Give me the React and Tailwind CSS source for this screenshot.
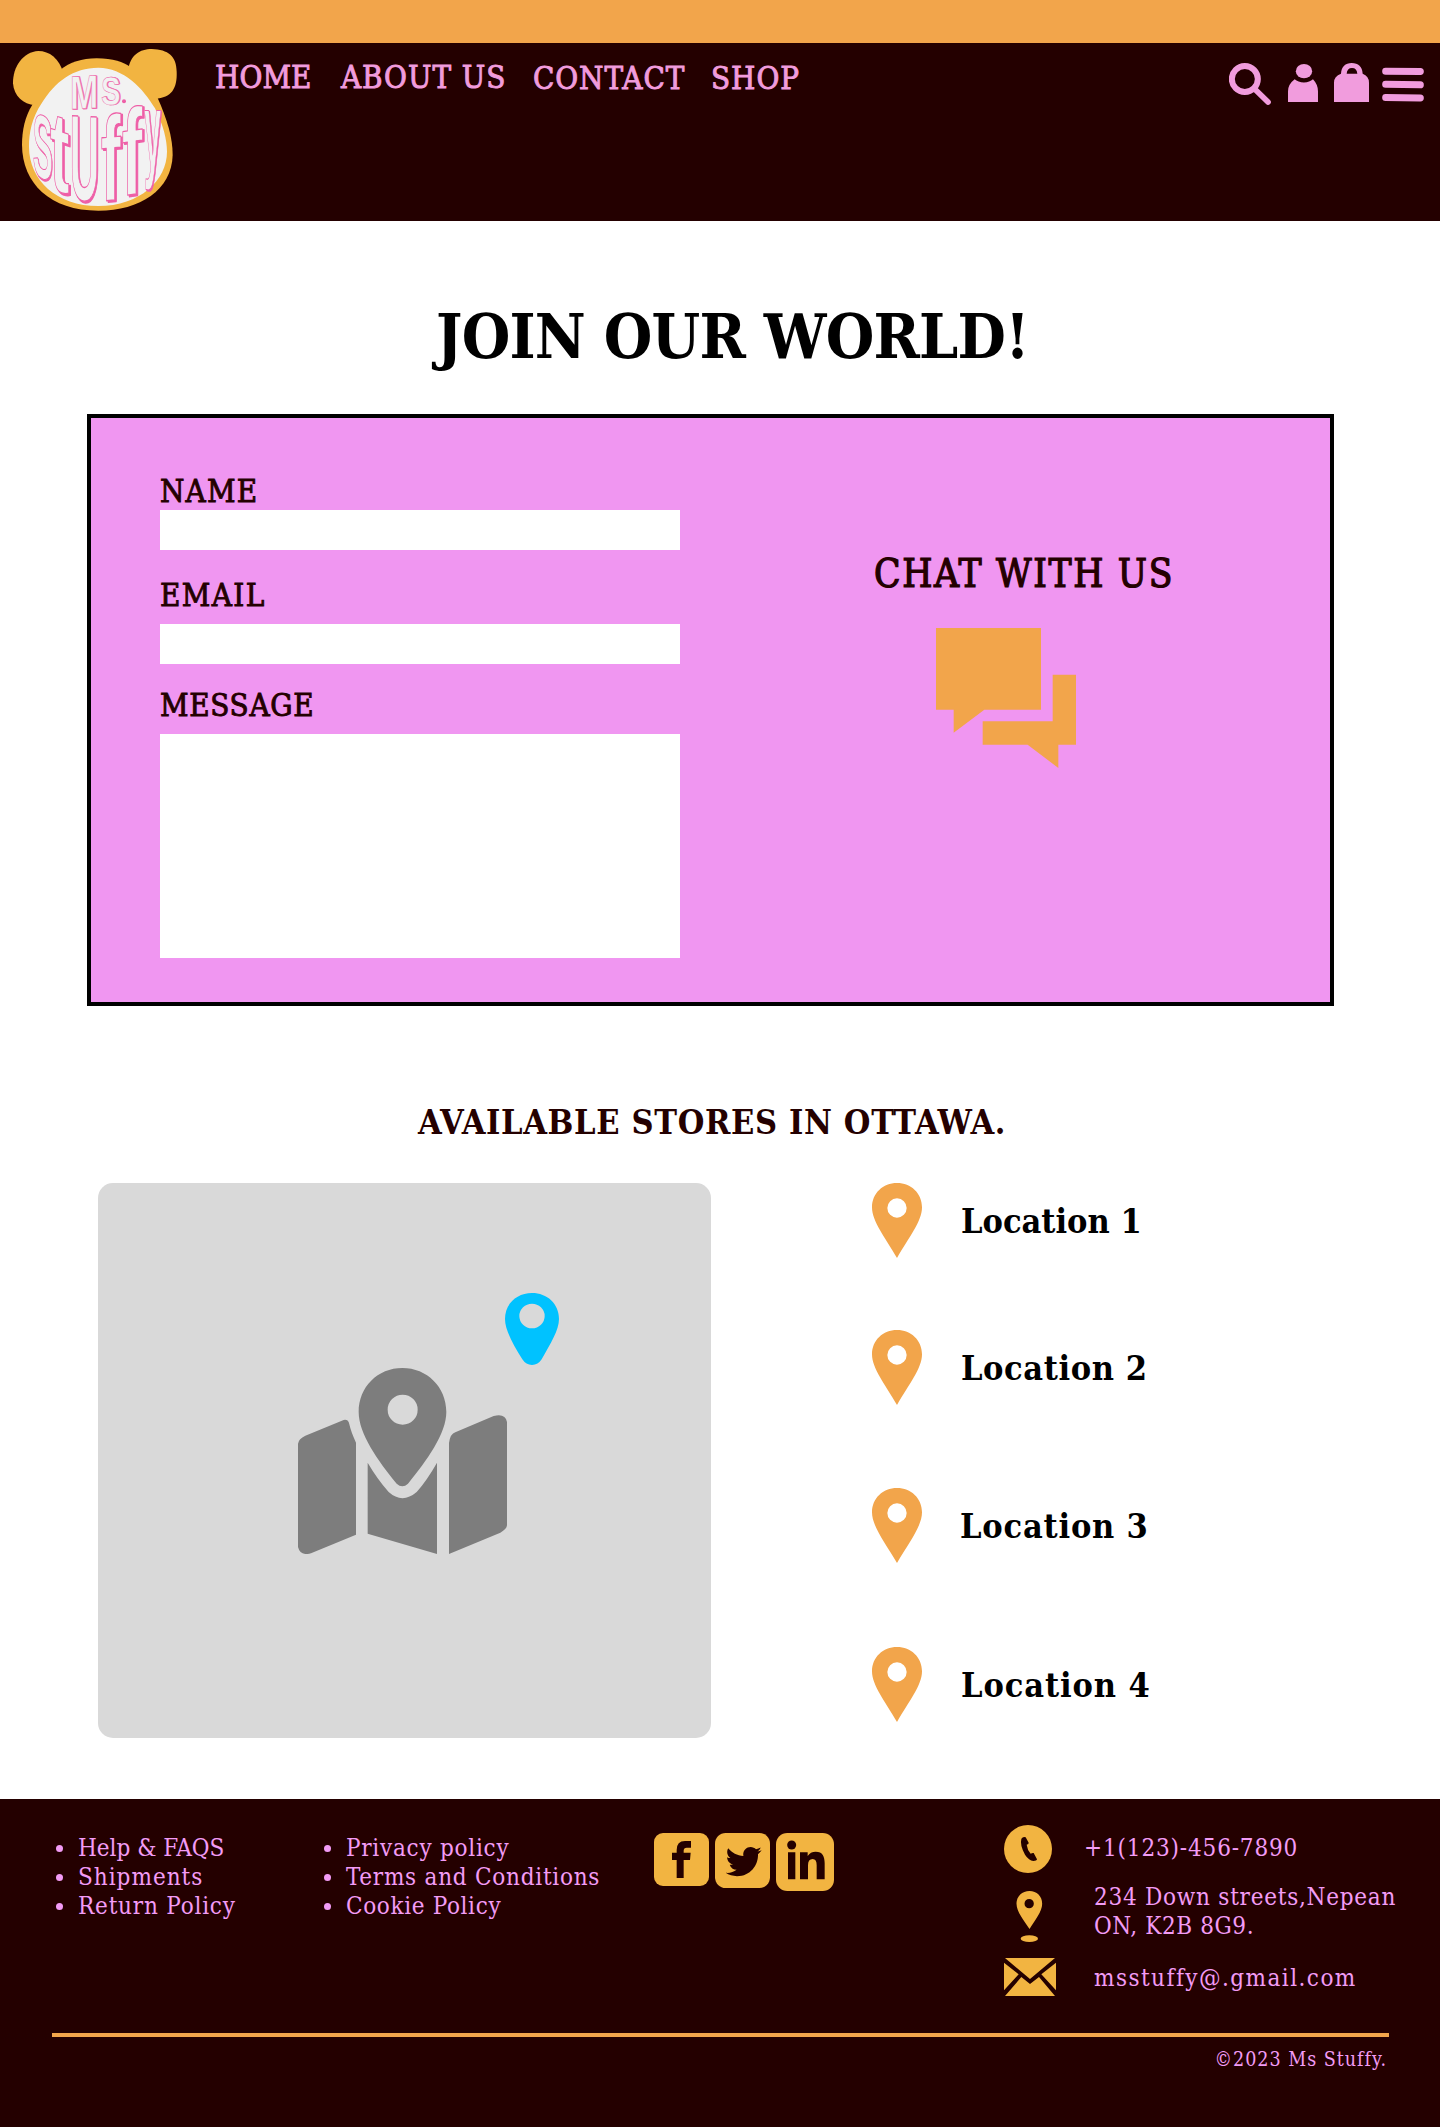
const medium = "[-webkit-text-stroke:0.9px_currentColor]";

const navItems = [
  { label: "HOME", cls: "w-[126px] tracking-[0.1px]" },
  { label: "ABOUT US", cls: "w-[192px] tracking-[0.95px]" },
  { label: "CONTACT", cls: "w-[178px] tracking-[0.95px] pt-px" },
  { label: "SHOP", cls: "tracking-[1px] pt-px" },
];

const locations = [
  { label: "Location 1", text: "pl-[39px] tracking-[0px]", row: "h-[147px]" },
  { label: "Location 2", text: "pl-[39px] tracking-[0.6px]", row: "h-[158px]" },
  { label: "Location 3", text: "pl-[38px] tracking-[0.8px]", row: "h-[159px]" },
  { label: "Location 4", text: "pl-[39px] tracking-[0.9px]", row: "h-[75px]" },
];

const helpLinks = [
  { label: "Help & FAQS", cls: "tracking-[0px]" },
  { label: "Shipments", cls: "tracking-[1px]" },
  { label: "Return Policy", cls: "tracking-[0.8px]" },
];

const policyLinks = [
  { label: "Privacy policy", cls: "tracking-[0.75px]" },
  { label: "Terms and Conditions", cls: "tracking-[0.75px]" },
  { label: "Cookie Policy", cls: "tracking-[0.65px]" },
];

function LogoLetter({ ch, x, y, sx, sy, skew = 0, lean = 0 }) {
  return (
    <g transform={`translate(${x} ${y}) skewY(${skew}) skewX(${lean}) scale(${sx} ${sy})`}>
      <text x="3" y="1.2" fill="#ee5fa7" stroke="#ee5fa7" strokeWidth="1.6" strokeLinejoin="round">{ch}</text>
      <text x="0" y="0" fill="#f2f2f2" stroke="#ee5fa7" strokeWidth="1.1" strokeLinejoin="round">{ch}</text>
    </g>
  );
}

function Logo() {
  return (
    <svg className="h-[178px] w-[200px] shrink-0 overflow-visible" viewBox="0 39 600 534" fontFamily="'Liberation Sans'" fontWeight="700" fontSize="100">
      <g fill="#f2b441">
        <path d="M190 130C178 85 148 63 115 63C70 65 38 110 39 160C42 200 70 222 105 226Z" />
        <path d="M385 120C390 75 420 57 455 57C505 58 530 80 530 125C532 175 515 203 465 206Z" />
        <path d="M290 85C340 85 370 97 390 110C430 140 455 175 473 204C500 265 518 320 518 375C515 480 420 542 295 542C150 542 67 460 66 345C66 300 75 260 97 224L180 120C210 97 245 85 290 85Z" />
      </g>
      <path fill="#f2f2f2" d="M295 113C370 113 430 175 465 235C490 285 501 330 501 365C501 450 420 528 295 528C170 528 87 450 87 350C87 310 95 265 125 220C165 155 220 113 295 113Z" />
      <LogoLetter ch="M" x={210} y={238} sx={1.02} sy={1.42} skew={-3} />
      <LogoLetter ch="S" x={303} y={224} sx={0.88} sy={1.22} />
      <circle cx="372" cy="214" r="6" fill="#ee5fa7" />
      <LogoLetter ch="S" x={98} y={432} sx={0.9} sy={2.7} skew={22} />
      <LogoLetter ch="t" x={150} y={474} sx={1.75} sy={3.4} skew={18} />
      <LogoLetter ch="U" x={209} y={508} sx={1.22} sy={3.65} skew={3} />
      <LogoLetter ch="f" x={302} y={514} sx={1.8} sy={3.6} skew={-5} />
      <LogoLetter ch="f" x={365} y={498} sx={1.85} sy={3.65} skew={-8} />
      <LogoLetter ch="y" x={433} y={414} sx={0.9} sy={3.2} />
    </svg>
  );
}

function OrangePin() {
  return (
    <svg className="h-[75px] w-[50px] shrink-0" viewBox="0 0 150 225" fill="#f2a54b" fillRule="evenodd">
      <path d="M75 0C117 0 150 31 150 73C150 115 110 165 75 225C40 165 0 115 0 73C0 31 33 0 75 0ZM75 46A29 29 0 1 0 75 104A29 29 0 1 0 75 46Z" />
    </svg>
  );
}

function Header() {
  return (
    <header>
      <div className="h-[43px] bg-[#f2a54b]" />
      <div className="flex h-[178px] items-start bg-[#240000] text-[#f19cdd]">
        <Logo />
        <nav className={`flex pt-[14px] pl-[15px] text-[31px] leading-[40px] whitespace-nowrap ${medium}`}>
          {navItems.map((n) => (
            <a key={n.label} className={n.cls}>{n.label}</a>
          ))}
        </nav>
        <div className="ml-auto flex items-start pt-5 pr-4">
          <svg className="h-[42px] w-[42px]" viewBox="57 69 126 126" fill="none" stroke="currentColor">
            <circle cx="104.500" cy="117" r="39" strokeWidth="18" />
            <path d="M134 147L174 186" strokeWidth="17" strokeLinecap="round" />
          </svg>
          <svg className="mt-[0.7px] ml-[17px] h-[38.300px] w-[30px]" viewBox="234 71 90 115" fill="currentColor">
            <ellipse cx="282" cy="92.500" rx="24.500" ry="21.500" />
            <path d="M254 117Q264 126 282 126.500Q299 126 309 117Q324 133 324 153V186H234V153Q234 132 254 117Z" />
          </svg>
          <svg className="ml-4 h-[39px] w-[35px]" viewBox="372 69 105 117" fill="currentColor" fillRule="evenodd">
            <path d="M393 101C394 80 406 69 425 69C445 69 457 80 458 101Q477 108 477 128V186H372V128Q372 108 393 101ZM410 101H442C441 90 436 84 426 84C416 84 411 90 410 101Z" />
          </svg>
          <svg className="mt-1 ml-[13px] h-[35px] w-[42px]" viewBox="515 81 126 105" stroke="currentColor" strokeWidth="21" strokeLinecap="round">
            <path d="M526 93.500L630 94.500M526 133L630 134.500M526 172.500L630 174" />
          </svg>
        </div>
      </div>
    </header>
  );
}

function ContactForm() {
  return (
    <section className="mt-[35px] ml-[87px] flex h-[592px] w-[1247px] border-4 border-black bg-[#f096f1] text-[#240000]">
      <form className={`flex w-[589px] flex-col pt-[53px] pl-[69px] text-[31px] leading-[40px]`}>
        <label className={`h-[39px] tracking-[1.2px] ${medium}`}>NAME</label>
        <div className="h-10 w-[520px] bg-white" />
        <label className={`mt-[25px] h-[49px] tracking-[1.4px] ${medium}`}>EMAIL</label>
        <div className="h-10 w-[520px] bg-white" />
        <label className={`mt-[21px] h-[49px] tracking-[0.7px] ${medium}`}>MESSAGE</label>
        <div className="h-[224px] w-[520px] bg-white" />
      </form>
      <div className="pt-[131px] pl-[194px]">
        <h2 className="text-[38.5px] leading-[50px] tracking-[1.65px] whitespace-nowrap [-webkit-text-stroke:1.2px_currentColor]">CHAT WITH US</h2>
        <svg className="mt-[29px] ml-[62px] h-[140px] w-[140px]" viewBox="0 0 420 420" fill="#f2a54b">
          <path d="M0 0H315V245H145L53 314V245H0Z" />
          <path d="M350 140H420V350H367V420L275 350H140V280H350Z" />
        </svg>
      </div>
    </section>
  );
}

function StoreMap() {
  return (
    <div className="relative h-[555px] w-[613px] rounded-[15px] bg-[#d9d9d9]">
      <svg className="absolute top-[185px] left-[200px] h-[186px] w-[209px]" viewBox="53 293 627 558" fill="#7d7d7d" fillRule="evenodd">
        <path d="M366 293C440 293 498 350 498 425C498 490 440 570 383 640Q366 655 349 640C292 570 235 490 235 425C235 350 292 293 366 293ZM367 373A45 45 0 1 0 367 463A45 45 0 1 0 367 373Z" />
        <path d="M53 520Q55 505 75 496L190 449Q204 446 207 462Q212 485 227 517V793L92 849Q60 858 53 830Z" />
        <path d="M262 577Q290 625 325 665Q366 702 409 665Q440 630 470 577V851L262 790Z" />
        <path d="M506 851V518Q510 490 525 486L640 437Q675 428 680 455V765Q679 777 660 787Z" />
      </svg>
      <svg className="absolute top-[110px] left-[407px] h-[72px] w-[54px]" viewBox="675 69 162 216" fill="#00c2ff" fillRule="evenodd">
        <path d="M756 69C801 69 837 101 837 147C837 180 812 220 785 268Q774 285 756 285Q738 285 727 268C700 225 675 180 675 147C675 101 711 69 756 69ZM756 101A38 37 0 1 0 756 175A38 37 0 1 0 756 101Z" />
      </svg>
    </div>
  );
}

function Stores() {
  return (
    <section className="pt-[96px]">
      <h2 className="pl-[418px] text-[34px] leading-[40px] font-bold tracking-[0.65px] whitespace-nowrap text-[#240000]">
        AVAILABLE STORES IN OTTAWA.
      </h2>
      <div className="mt-[41px] flex pl-[98px]">
        <StoreMap />
        <ul className="pl-[161px]">
          {locations.map((l) => (
            <li key={l.label} className={`flex items-start ${l.row}`}>
              <OrangePin />
              <span className={`pt-[18px] text-[34px] leading-[40px] font-bold whitespace-nowrap text-black ${l.text}`}>{l.label}</span>
            </li>
          ))}
        </ul>
      </div>
    </section>
  );
}

function LinkList({ items }) {
  return (
    <ul className="text-2xl leading-[29px] whitespace-nowrap">
      {items.map((i) => (
        <li key={i.label} className="flex items-center">
          <span className="mr-[15px] h-[7px] w-[7px] rounded-full bg-current" />
          <span className={i.cls}>{i.label}</span>
        </li>
      ))}
    </ul>
  );
}

function Social() {
  return (
    <div className="flex items-start gap-1.5 pt-[34px]">
      <svg className="h-[53px] w-[55px]" viewBox="72 159 165 159">
        <rect x="72" y="159" width="165" height="159" rx="27" fill="#f2b441" />
        <path fill="#240000" d="M183 183V203H170Q161 203 161 212V218H182L180 240H161V294H140V240H126V218H140V210Q140 183 165 183Z" />
      </svg>
      <svg className="h-[55px] w-[55px]" viewBox="255 159 165 165">
        <rect x="255" y="159" width="165" height="165" rx="32" fill="#f2b441" />
        <path fill="#240000" transform="translate(287 190.500) scale(0.211)" d="M459.370 151.716c.325 4.548.325 9.097.325 13.645 0 138.720-105.583 298.558-298.558 298.558-59.452 0-114.680-17.219-161.137-47.106 8.447.974 16.568 1.299 25.340 1.299 49.055 0 94.213-16.568 130.274-44.832-46.132-.975-84.792-31.188-98.112-72.772 6.498.974 12.995 1.624 19.818 1.624 9.421 0 18.843-1.300 27.614-3.573-48.081-9.747-84.143-51.980-84.143-102.985v-1.299c13.969 7.797 30.214 12.670 47.431 13.319-28.264-18.843-46.781-51.005-46.781-87.391 0-19.492 5.197-37.360 14.294-52.954 51.655 63.675 129.300 105.258 216.365 109.807-1.624-7.797-2.599-15.918-2.599-24.040 0-57.828 46.782-104.934 104.934-104.934 30.213 0 57.502 12.670 76.670 33.137 23.715-4.548 46.456-13.320 66.599-25.340-7.798 24.366-24.366 44.833-46.132 57.827 21.117-2.273 41.584-8.122 60.426-16.243-14.292 20.791-32.161 39.308-52.628 54.253z" />
      </svg>
      <svg className="h-[58px] w-[58px]" viewBox="438 159 174 174" fill="#240000">
        <rect x="438" y="159" width="174" height="174" rx="34" fill="#f2b441" />
        <circle cx="485" cy="195" r="13.500" />
        <path d="M474 217H496V298H474ZM510 217H533V228Q541 215 557 215C578 215 584 229 584 250V298H560V256Q560 237 548 237Q534 237 534 256V298H510Z" />
      </svg>
    </div>
  );
}

function ContactInfo() {
  return (
    <div className="flex flex-col text-2xl leading-[29px] whitespace-nowrap">
      <div className="flex h-[92px] items-start pt-[26px]">
        <svg className="h-12 w-12" viewBox="72 105 144 144">
          <circle cx="144" cy="177" r="72" fill="#f2b441" />
          <path fill="#240000" d="M126 144Q132 139 137 142L146 158Q147 162 140 164Q142 180 152 191Q157 188 161 189L171 208Q170 213 160 213Q147 212 135 194Q119 165 124 147Z" />
        </svg>
        <span className="pt-[9px] pl-[32px] tracking-[0.85px]">+1(123)-456-7890</span>
      </div>
      <div className="flex h-[67px] items-start">
        <svg className="ml-3 h-[51px] w-[27px]" viewBox="109 303 80 153" fill="#f2b441" fillRule="evenodd">
          <path d="M149 303C171 303 187 319 187 341C187 365 165 390 149 417C132 390 110 365 110 341C110 319 127 303 149 303ZM148 327A14 14 0 1 0 148 355A14 14 0 1 0 148 327Z" />
          <ellipse cx="148.500" cy="446" rx="26" ry="10" />
        </svg>
        <div className="-mt-[8px] pl-[51px]">
          <p className="tracking-[0.75px]">234 Down streets,Nepean</p>
          <p className="tracking-[0.6px]">ON, K2B 8G9.</p>
        </div>
      </div>
      <div className="flex items-start">
        <svg className="h-[38px] w-[52px]" viewBox="72 504 156 114" fill="#f2b441">
          <path d="M75 504H225L150 567ZM75 618L124 561L150 582L177 561L225 618ZM72 518L116 553L72 601ZM228 518L184 553L228 601Z" />
        </svg>
        <span className="pt-[6px] pl-[38px] tracking-[1.45px]">msstuffy@.gmail.com</span>
      </div>
    </div>
  );
}

function Footer() {
  return (
    <footer className="mt-[61px] flex h-[328px] flex-col bg-[#240000] text-[#f29bf5]">
      <div className="flex h-[234px]">
        <div className="w-[268px] pt-[35px] pl-[56px]"><LinkList items={helpLinks} /></div>
        <div className="w-[386px] pt-[35px] pl-[56px]"><LinkList items={policyLinks} /></div>
        <div className="w-[350px]"><Social /></div>
        <ContactInfo />
      </div>
      <div className="ml-[52px] h-1 w-[1337px] bg-[#f2a54b]" />
      <p className="mt-[3px] pr-[53px] text-right text-[19.5px] leading-[40px] tracking-[1px]">©2023 Ms Stuffy.</p>
    </footer>
  );
}

export default function App() {
  return (
    <div className="h-[2127px] w-[1440px] overflow-hidden bg-white [font-family:'DejaVu_Serif_Condensed','DejaVu_Serif',serif]">
      <Header />
      <h1 className="mt-[73px] ml-[436px] text-[62px] leading-[85px] font-bold tracking-[-0.75px] whitespace-nowrap text-black">
        JOIN OUR WORLD!
      </h1>
      <ContactForm />
      <Stores />
      <Footer />
    </div>
  );
}
